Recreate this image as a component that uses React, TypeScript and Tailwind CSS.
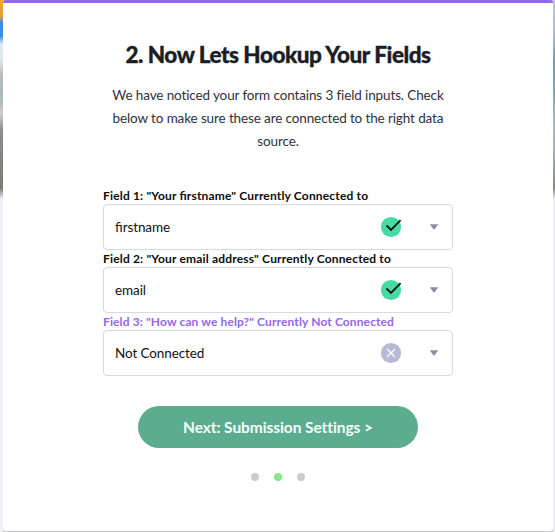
import React from "react";
import clsx from "clsx";

type Field = {
  id: number;
  label: string;
  value: string;
  connected: boolean;
};

const fields: Field[] = [
  {
    id: 1,
    label: 'Field 1: "Your firstname" Currently Connected to',
    value: "firstname",
    connected: true,
  },
  {
    id: 2,
    label: 'Field 2: "Your email address" Currently Connected to',
    value: "email",
    connected: true,
  },
  {
    id: 3,
    label: 'Field 3: "How can we help?" Currently Not Connected',
    value: "Not Connected",
    connected: false,
  },
];

const StatusIcon = ({ connected }: { connected: boolean }) => (
  <svg width="22" height="22" viewBox="0 0 22 22" fill="none">
    <circle cx="11" cy="11" r="10.1" fill={connected ? "#46dba5" : "#b9b9d6"} />
    {connected ? (
      <path d="M6.5 9.5L11 13.9L20.6 4.2" stroke="#0b1512" strokeWidth="1.8" />
    ) : (
      <path d="M7 7L15 15M15 7L7 15" stroke="#fff" strokeWidth="1.2" />
    )}
  </svg>
);

const FieldSelect = ({ field }: { field: Field }) => (
  <div className="[font-feature-settings:'liga']">
    <div
      className={clsx(
        "h-[17px] whitespace-nowrap text-[12px] leading-[17px] font-bold",
        field.connected
          ? "tracking-[0.17px] text-[#0c0c0f]"
          : "tracking-[0.12px] text-[#9467e6]"
      )}
    >
      {field.label}
    </div>
    <button className="flex h-[46px] w-full items-center rounded-[4px] border border-[#d8d8e2] bg-white pl-[11px] pr-[13px] text-left text-[13.5px] tracking-[-0.1px] text-[#111114]">
      <span className="flex-1 pt-px">{field.value}</span>
      <StatusIcon connected={field.connected} />
      <svg className="ml-[27px]" width="10" height="6" viewBox="0 0 10 6">
        <path d="M0.8 0.2H9.2L5.8 5Q5 5.8 4.2 5Z" fill="#8d8d9d" />
      </svg>
    </button>
  </div>
);

export default function App() {
  return (
    <div className="flex h-[532px] w-[555px] bg-[#c9c9cc] font-['Lato',sans-serif]">
      <div className="w-[3px] bg-[linear-gradient(to_bottom,#efa62f_0px,#e5a238_16px,#3c8be9_23px,#3c8be9_36px,#dce9ef_44px,#dfe6e8_60px,#b9b9b9_76px,#a9bcc0_100px,#d2cbc9_114px,#8d8d8b_130px,#7c7b73_188px,#f0f0f6_199px)]" />
      <div className="flex h-[531px] w-[550px] flex-col items-center rounded-[3px] border-t-[3px] border-[#9166f2] bg-white">
        <h1 className="mt-[36px] h-[32px] whitespace-nowrap text-[22.5px] leading-[32px] font-black tracking-[-0.48px] text-[#1c1d26] [-webkit-text-stroke:0.35px_#1c1d26]">
          2. Now Lets Hookup Your Fields
        </h1>
        <p className="mt-[13px] w-[340px] text-center text-[13.5px] leading-[23px] tracking-[-0.12px] text-[#30313c]">
          We have noticed your form contains 3 field inputs. Check below to make
          sure these are connected to the right data source.
        </p>
        <div className="mt-[34px] w-[350px]">
          {fields.map((field) => (
            <FieldSelect key={field.id} field={field} />
          ))}
        </div>
        <button className="mt-[30px] h-[42px] w-[280px] rounded-full bg-[#5cac90] pt-[2px] text-[15.5px] font-bold tracking-[-0.08px] text-[#f4fffb]">
          Next: Submission Settings &gt;
        </button>
        <div className="mt-[25px] flex gap-[15px]">
          <span className="size-2 rounded-full bg-[#cbcbcb]" />
          <span className="size-2 rounded-full bg-[#84e888]" />
          <span className="size-2 rounded-full bg-[#cbcbcb]" />
        </div>
      </div>
      <div className="w-[2px] bg-[linear-gradient(to_bottom,#c5c5d2_0px,#b4bcc8_35px,#709dab_60px,#789fa9_80px,#a9bcbd_125px,#a4b5b3_150px,#85857d_188px,#ececf2_199px)]" />
    </div>
  );
}
